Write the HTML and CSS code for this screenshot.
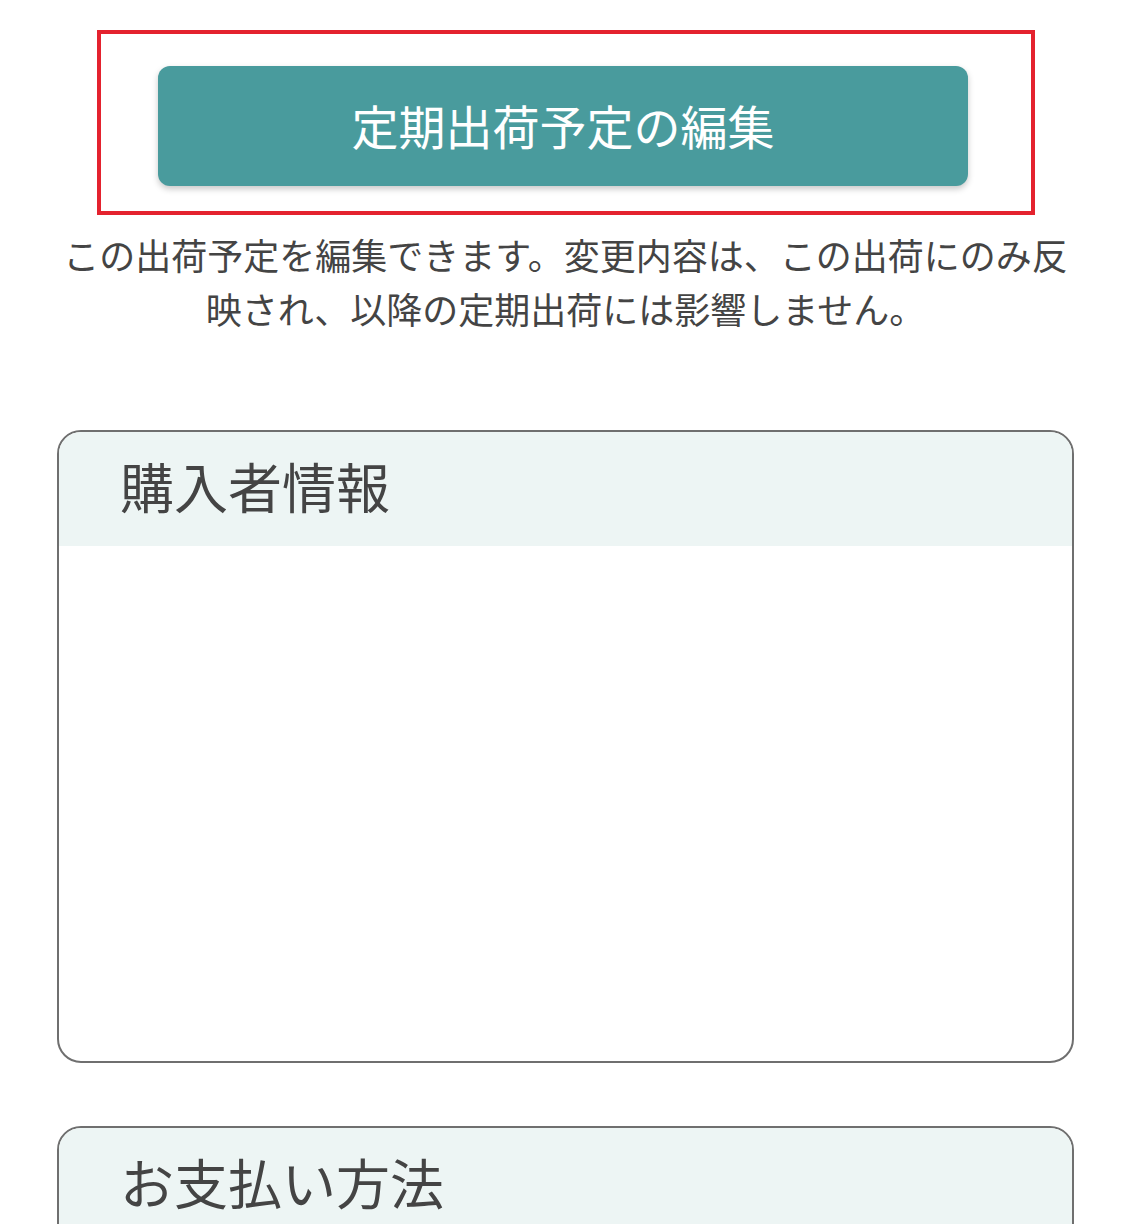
FILE: index.html
```html
<!DOCTYPE html>
<html lang="ja">
<head>
    <meta charset="UTF-8">
    <title>定期出荷予定の編集</title>
    <link rel="stylesheet" href="styles.css">
</head>
<body>
    <div class="page">
        <div class="edit-box">
            <button class="edit-button">定期出荷予定の編集</button>
        </div>

        <p class="note">この出荷予定を編集できます。変更内容は、この出荷にのみ反映され、以降の定期出荷には影響しません。</p>

        <section class="card">
            <h2 class="card-title">購入者情報</h2>
            <div class="card-body"></div>
        </section>

        <section class="card">
            <h2 class="card-title">お支払い方法</h2>
            <div class="card-body"></div>
        </section>
    </div>
</body>
</html>
```

FILE: styles.css
```css
:root {
    --teal: #499b9d;
    --header-bg: #edf5f4;
    --border: #6f6f6f;
    --text: #444;
    --red: #e4222e;
}

body {
    margin: 0;
    font-family: "Noto Sans CJK JP", "Noto Sans", sans-serif;
    color: var(--text);
    background: #fff;
}

.page {
    padding: 30px 51px 0 57px;
}

.edit-box {
    margin: 0 39px 0 40px;
    border: 4px solid var(--red);
    padding: 32px 60px 25px 57px;
}

.edit-button {
    display: block;
    width: 810px;
    height: 120px;
    border: none;
    border-radius: 12px;
    background-color: var(--teal);
    color: #fff;
    font-family: inherit;
    font-size: 47px;
    padding: 0 0 4px;
    box-shadow: 0 3px 6px rgba(0, 0, 0, 0.22);
    cursor: pointer;
}

.note {
    margin: 12px 0 95px;
    text-align: center;
    font-size: 36px;
    line-height: 54px;
    color: var(--text);
}

.card {
    border: 2px solid var(--border);
    border-radius: 24px;
    overflow: hidden;
    margin-bottom: 63px;
}

.card-title {
    margin: 0;
    height: 108px;
    padding: 0 0 6px 61px;
    background-color: var(--header-bg);
    font-size: 54px;
    font-weight: 400;
    line-height: 108px;
}

.card-body {
    height: 515px;
}
```
